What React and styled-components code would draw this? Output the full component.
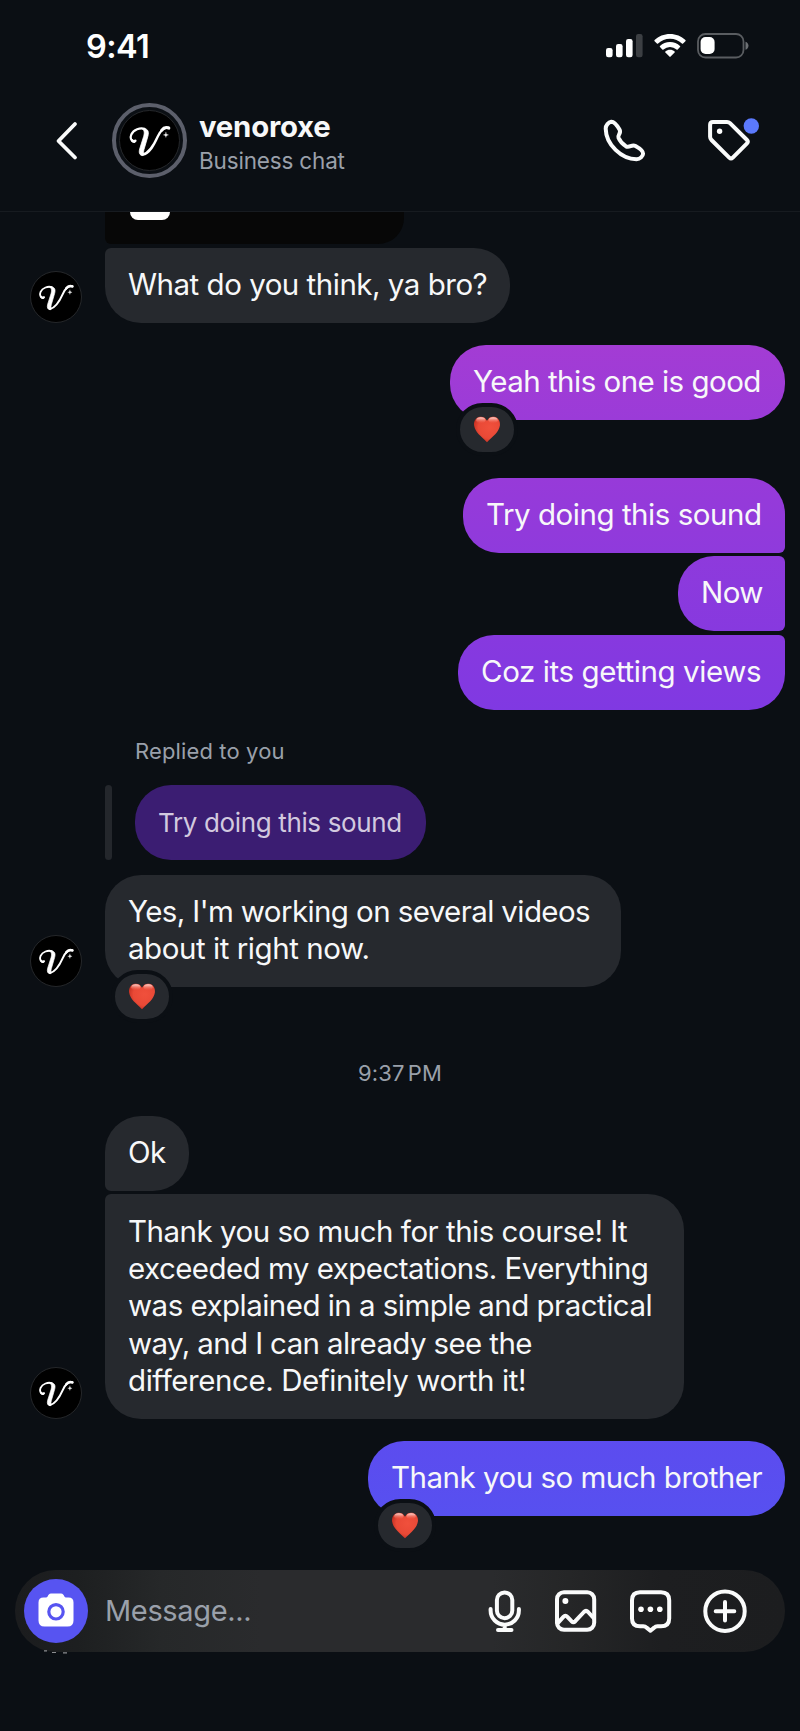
import React from 'react';
import styled, { createGlobalStyle } from 'styled-components';

const GlobalStyle = createGlobalStyle`
  * {
    box-sizing: border-box;
  }

  body {
    margin: 0;
    background: #0b0f14;
    font-family: Inter, "Liberation Sans", sans-serif;
    color: #f7f8f9;
  }
`;

const Screen = styled.div`
  width: 800px;
  height: 1731px;
  overflow: hidden;
  display: flex;
  flex-direction: column;
  background: #0b0f14;
`;

const StatusBar = styled.div`
  height: 92px;
  padding: 0 51px 0 86px;
  display: flex;
  align-items: center;
  justify-content: space-between;
`;

const Clock = styled.span`
  font-size: 32.5px;
  font-weight: 600;
  letter-spacing: -0.6px;
  color: #fff;
`;

const StatusIcons = styled.div`
  display: flex;
  align-items: center;
`;

const Header = styled.header`
  height: 120px;
  padding: 11px 39px 0 54px;
  display: flex;
  align-items: flex-start;
  border-bottom: 1px solid #171b20;
`;

const BackButton = styled.button`
  width: 26px;
  height: 75px;
  margin-right: 32px;
  padding: 0;
  border: none;
  background: none;
  display: flex;
  align-items: center;
`;

const AvatarRing = styled.div`
  width: 75px;
  height: 75px;
  flex: none;
  display: grid;
  place-items: center;
  border: 4px solid #5c5f6b;
  border-radius: 50%;
`;

const Avatar = styled.div`
  width: ${(p) => p.$size}px;
  height: ${(p) => p.$size}px;
  flex: none;
  border: 1px solid #25272a;
  border-radius: 50%;
  background: #000;

  svg {
    display: block;
    width: 100%;
    height: 100%;
  }
`;

const Contact = styled.div`
  flex: 1;
  padding: 5px 0 0 12px;
`;

const Name = styled.div`
  font-size: 29.3px;
  line-height: 37px;
  font-weight: 700;
  letter-spacing: -0.2px;
`;

const Subtitle = styled.div`
  font-size: 22.5px;
  line-height: 32px;
  letter-spacing: -0.17px;
  color: #9aa0aa;
`;

const HeaderActions = styled.div`
  display: flex;
  padding-top: 13px;
  gap: 56px;
`;

const Thread = styled.main`
  height: 1358px;
  padding-right: 15px;
`;

const Row = styled.div`
  display: flex;
  align-items: flex-end;
  justify-content: ${(p) => (p.$mine ? 'flex-end' : 'flex-start')};
  margin-top: ${(p) => p.$gap}px;
`;

const Gutter = styled.div`
  width: 105px;
  flex: none;
  padding-left: 30px;
`;

const MediaCard = styled.div`
  width: 299px;
  height: 32px;
  margin-left: 105px;
  padding-left: 25px;
  border-radius: 0 0 26px 6px;
  background: #070707;
`;

const MediaChip = styled.div`
  width: 40px;
  height: 8px;
  border-radius: 0 0 10px 10px;
  background: #fff;
`;

const Bubble = styled.div`
  position: relative;
  width: ${(p) => p.$width}px;
  padding: 18.1px 0 19.4px 23px;
  border-radius: ${(p) => p.$radius || '36px'};
  background: ${(p) => p.$bg || '#26292e'};
  font-size: 29.5px;
  line-height: 37.4px;
  white-space: nowrap;
`;

const Line = styled.div`
  letter-spacing: ${(p) => p.$track}px;
`;

const Reaction = styled.div`
  position: absolute;
  left: 5.5px;
  bottom: -36px;
  width: 62px;
  height: 53px;
  display: grid;
  place-items: center;
  border: 4px solid #0b0f14;
  border-radius: 27px;
  background: #26292e;
`;

const ReplyLabel = styled.div`
  margin: 27px 0 0 135px;
  font-size: 22px;
  line-height: 28px;
  letter-spacing: 0.13px;
  color: #9aa0aa;
`;

const Quote = styled.div`
  display: flex;
  gap: 23px;
  margin: 20px 0 0 105px;
`;

const QuoteBar = styled.div`
  width: 7px;
  height: 75px;
  border-radius: 4px;
  background: #24272c;
`;

const QuoteBubble = styled.div`
  width: 291px;
  height: 75px;
  padding-left: 23px;
  border-radius: 36px;
  background: #3b1d72;
  color: #d2c9df;
  font-size: 26px;
  line-height: 75px;
  letter-spacing: -0.36px;
  white-space: nowrap;
`;

const TimeStamp = styled.div`
  width: 800px;
  margin-top: 72px;
  font-size: 22px;
  line-height: 28px;
  text-align: center;
  word-spacing: -3px;
  letter-spacing: 0.1px;
  color: #9aa0aa;
`;

const Composer = styled.footer`
  position: relative;
  height: 82px;
  margin: 0 15px;
  padding: 0 38px 0 9px;
  display: flex;
  align-items: center;
  border-radius: 41px;
  background: linear-gradient(90deg, #1b1c1e 0%, #1d1f20 8%, #262829 19%, #2a2b2d 32%, #2a2b2d 62%, #252627 72%, #1d1e20 84%, #1c1d1f 100%);
`;

const CameraButton = styled.button`
  width: 64px;
  height: 64px;
  padding: 0;
  display: grid;
  place-items: center;
  border: none;
  border-radius: 50%;
  background: #5754f1;
`;

const Placeholder = styled.span`
  flex: 1;
  padding: 0 0 2px 17px;
  font-size: 29px;
  letter-spacing: -0.35px;
  color: #9aa0aa;
`;

const ComposerActions = styled.div`
  display: flex;
  align-items: center;
  gap: 30px;
`;

const PeekingAvatar = styled.svg`
  position: absolute;
  left: 27px;
  bottom: -2px;
`;

const stroke = {
  fill: 'none',
  stroke: '#fafbfb',
  strokeWidth: 4,
  strokeLinecap: 'round',
  strokeLinejoin: 'round',
};

const SignalIcon = () => (
  <svg width="37" height="24" viewBox="0 0 37 24" fill="#fff">
    <rect x="0" y="14" width="6.6" height="9.3" rx="2.2" />
    <rect x="10" y="10" width="6.6" height="13.3" rx="2.2" />
    <rect x="20" y="5" width="6.6" height="18.3" rx="2.2" />
    <rect x="30" y="0" width="6.6" height="23.3" rx="2.2" fill="#3c3f43" />
  </svg>
);

const WifiIcon = () => (
  <svg width="32" height="24" viewBox="0 0 32 24" fill="#fff" style={{ marginLeft: 11 }}>
    <path d="M16 0C22 0 27.400 2.300 31.400 6.100Q31.900 6.700 31.400 7.300L29.100 9.600Q28.500 10.100 27.900 9.600A17 17 0 0 0 4.100 9.600Q3.500 10.100 2.900 9.600L.6 7.300Q.1 6.700 .6 6.100C4.600 2.300 10 0 16 0Z" />
    <path d="M16 8C19.900 8 23.400 9.500 26 11.900Q26.600 12.500 26 13.100L23.700 15.400Q23.100 15.900 22.500 15.400A9.700 9.700 0 0 0 9.500 15.400Q8.900 15.900 8.300 15.400L6 13.100Q5.400 12.500 6 11.900C8.600 9.500 12.100 8 16 8Z" />
    <path d="M16 15.700C17.800 15.700 19.400 16.400 20.600 17.400Q21.200 18 20.600 18.600L16.600 22.600Q16 23.200 15.400 22.600L11.400 18.600Q10.800 18 11.400 17.400C12.600 16.400 14.200 15.700 16 15.700Z" />
  </svg>
);

const BatteryIcon = () => (
  <svg width="52" height="26" viewBox="0 0 52 26" style={{ marginLeft: 11 }}>
    <rect x="1" y="1" width="45.500" height="23.500" rx="7.500" fill="none" stroke="#5a5d61" strokeWidth="1.800" />
    <rect x="3.600" y="4" width="14" height="17" rx="5" fill="#fff" />
    <path d="M48.500 8.700C50.200 9.200 51.500 10.800 51.500 12.700S50.200 16.300 48.500 16.800Z" fill="#6d7074" />
  </svg>
);

const BackIcon = () => (
  <svg width="26" height="42" viewBox="0 0 26 42" {...stroke} strokeWidth="3.800">
    <path d="M21 4L4.500 21L21 37.500" />
  </svg>
);

const Logo = () => (
  <svg viewBox="0 0 60 60" fill="none" stroke="#fff" strokeLinecap="round" strokeLinejoin="round">
    <path d="M14.500 31.300C11.200 30.500 10 27.300 11.500 23.900C13.800 18.800 20.500 16.800 25 18.200" strokeWidth="2.200" />
    <path d="M12.300 29.800C13.200 31.200 14.500 31.300 15.500 30.300" strokeWidth="2.700" />
    <path d="M22 17.800C28.300 17.300 29.800 20.400 28.400 25.600L24.400 39.200C23.700 41.700 23.700 43.400 24.600 44.400L23 45.300C19.800 45.100 19 42.400 20 38.600L24 26C25.200 22 24.800 19.200 22 17.800Z" fill="#fff" strokeWidth=".8" />
    <path d="M22.800 44.400C30.300 43.200 35 33.500 38.400 26C41.300 19.600 44.300 16.300 49.700 17" strokeWidth="2.400" />
    <path d="M42.300 19.600C44.500 16.700 46.700 16.200 49.700 17.400" strokeWidth="3" />
    <path d="M46.700 21.700C47 23.700 47.300 24 49.300 24.300C47.300 24.600 47 24.900 46.700 26.900C46.400 24.900 46.100 24.600 44.100 24.300C46.100 24 46.400 23.700 46.700 21.700Z" fill="#fff" strokeWidth=".3" />
  </svg>
);

const PhoneIcon = () => (
  <svg width="46" height="46" viewBox="602 116 46 46" {...stroke}>
    <path d="M611.300 121.800C608.500 122.300 605.700 125.200 605.700 128.700C606 144.500 621.500 159.200 636.500 159.200C640.200 159.200 642.900 156.200 643.100 153.600C643.300 150.500 638.500 147.700 635.500 146C631.500 143.900 629.500 148.500 625.800 146.200C622.500 144 619.700 140.700 618.500 137.800C617.400 134.800 621.700 133.300 619.500 129.600C617.300 125.800 614.700 121.500 611.300 121.800Z" />
  </svg>
);

const TagIcon = () => (
  <svg width="57" height="46" viewBox="704 116 57 46">
    <path
      {...stroke}
      d="M713 121.900H727Q728.800 121.900 730 123.100L747 140Q748.700 141.700 747 143.400L732.800 157.600Q731 159.300 729.200 157.600L711.500 140Q710.100 138.600 710.100 136.700V124.800Q710.100 121.900 713 121.900Z"
    />
    <circle cx="719.600" cy="131.300" r="2.700" fill="#fff" />
    <circle cx="751.300" cy="126" r="7.700" fill="#5b79fc" />
  </svg>
);

const HeartIcon = () => (
  <svg width="28" height="27" viewBox="0 0 28 27">
    <defs>
      <radialGradient id="heartFill" cx="0.6" cy="0.42" r="0.72">
        <stop offset="0" stopColor="#f0503c" />
        <stop offset="0.6" stopColor="#e94936" />
        <stop offset="1" stopColor="#b52418" />
      </radialGradient>
      <linearGradient id="heartShine" x1="0" y1="0" x2="0" y2="1">
        <stop offset="0" stopColor="#ffe9e4" stopOpacity="0.95" />
        <stop offset="1" stopColor="#f4705f" stopOpacity="0" />
      </linearGradient>
    </defs>
    <path
      d="M14 4.800C12 .3 8 .3 5.700 1.100C2.300 2.300 .6 6 1.100 9.500C2 16 8.200 20.500 14 26.200C19.800 20.500 26 16 26.900 9.500C27.400 6 25.700 2.300 22.300 1.100C20 .3 16 .3 14 4.800Z"
      fill="url(#heartFill)"
    />
    <ellipse cx="7.800" cy="4.200" rx="4.600" ry="3" fill="url(#heartShine)" />
    <ellipse cx="20.200" cy="4.200" rx="4.600" ry="3" fill="url(#heartShine)" />
  </svg>
);

const CameraIcon = () => (
  <svg width="36" height="34" viewBox="0 0 36 34" style={{ marginTop: -3 }}>
    <path
      d="M13 .5H23C25 .5 25.600 2 26.300 3.200C26.900 4.200 27.400 4.600 28.500 4.600H30.500Q35.500 4.600 35.500 9.600V27.500Q35.500 33.500 29.500 33.500H6.500Q.5 33.500 .5 27.500V9.600Q.5 4.600 5.500 4.600H7.500C8.600 4.600 9.100 4.200 9.700 3.200C10.400 2 11 .5 13 .5Z"
      fill="#fff"
    />
    <circle cx="18" cy="18.800" r="7.200" fill="#fff" stroke="#5754f1" strokeWidth="3.200" />
  </svg>
);

const MicIcon = () => (
  <svg width="36" height="46" viewBox="487 1588 36 46" {...stroke}>
    <rect x="496.900" y="1592.400" width="15.400" height="25.800" rx="7.700" />
    <path d="M490.600 1609V1610.500A14 14 0 0 0 518.900 1610.500V1609M504.700 1625V1630M498 1630H511.500" />
  </svg>
);

const PictureIcon = () => (
  <svg width="45" height="46" viewBox="553 1588 45 46" {...stroke}>
    <rect x="557" y="1592.200" width="37.200" height="37.600" rx="7" />
    <path d="M557.500 1623.300L563.400 1616.900Q565.400 1614.800 567.400 1616.900L571.500 1621.200Q573.400 1623 575.300 1621.200L583.900 1612Q586 1609.900 588.100 1612L594 1618.300" />
    <circle cx="565.400" cy="1601" r="3" fill="#fff" stroke="none" />
  </svg>
);

const CommentIcon = () => (
  <svg width="45" height="46" viewBox="628 1588 45 46" {...stroke}>
    <path d="M640 1592.200H661Q669.200 1592.200 669.200 1600.200V1618.500Q669.200 1626.300 661 1626.300H657.500Q655.500 1626.300 654.200 1627.600L650.400 1630.800L646.600 1627.600Q645.300 1626.300 643.300 1626.300H640Q632 1626.300 632 1618.500V1600.200Q632 1592.200 640 1592.200Z" />
    <g fill="#fff" stroke="none">
      <circle cx="641" cy="1609.300" r="2.800" />
      <circle cx="650.400" cy="1609.300" r="2.800" />
      <circle cx="659.800" cy="1609.300" r="2.800" />
    </g>
  </svg>
);

const PlusIcon = () => (
  <svg width="44" height="46" viewBox="703 1588 44 46" {...stroke}>
    <circle cx="725" cy="1611.200" r="19.700" />
    <path d="M725 1602V1620.600M715.700 1611.200H734.300" />
  </svg>
);

// each line is [text, letter-spacing]
function Message({ lines, mine, gap, avatar, heart, width, radius, bg }) {
  return (
    <Row $mine={mine} $gap={gap}>
      {!mine && <Gutter>{avatar && <Avatar $size={52}><Logo /></Avatar>}</Gutter>}
      <Bubble $width={width} $radius={radius} $bg={bg}>
        {lines.map(([text, track]) => (
          <Line key={text} $track={track}>{text}</Line>
        ))}
        {heart && <Reaction><HeartIcon /></Reaction>}
      </Bubble>
    </Row>
  );
}

const sent = [
  { lines: [['Yeah this one is good', -0.52]], gap: 22, width: 335, heart: true, bg: 'linear-gradient(#a33cd4, #9b3bd8)' },
  { lines: [['Try doing this sound', -0.46]], gap: 58, width: 322, radius: '36px 36px 6px 36px', bg: 'linear-gradient(#973ad9, #8f3adc)' },
  { lines: [['Now', -0.6]], gap: 3.6, width: 107, radius: '36px 6px 6px 36px', bg: 'linear-gradient(#8e3adc, #8739df)' },
  { lines: [['Coz its getting views', -0.41]], gap: 3.6, width: 327, radius: '36px 6px 36px 36px', bg: 'linear-gradient(#8739df, #8039e2)' },
];

const working = [
  ["Yes, I'm working on several videos", -0.6],
  ['about it right now.', -0.45],
];

const review = [
  ['Thank you so much for this course! It', -0.5],
  ['exceeded my expectations. Everything', -0.54],
  ['was explained in a simple and practical', -0.53],
  ['way, and I can already see the', -0.62],
  ['difference. Definitely worth it!', -0.43],
];

function App() {
  return (
    <>
      <GlobalStyle />
      <Screen>
        <StatusBar>
          <Clock>9:41</Clock>
          <StatusIcons>
            <SignalIcon />
            <WifiIcon />
            <BatteryIcon />
          </StatusIcons>
        </StatusBar>

        <Header>
          <BackButton aria-label="Back"><BackIcon /></BackButton>
          <AvatarRing>
            <Avatar $size={61}><Logo /></Avatar>
          </AvatarRing>
          <Contact>
            <Name>venoroxe</Name>
            <Subtitle>Business chat</Subtitle>
          </Contact>
          <HeaderActions>
            <PhoneIcon />
            <TagIcon />
          </HeaderActions>
        </Header>

        <Thread>
          <MediaCard><MediaChip /></MediaCard>
          <Message lines={[['What do you think, ya bro?', -0.49]]} gap={4} width={405} radius="6px 36px 36px 36px" avatar />
          {sent.map((message) => (
            <Message key={message.width} mine {...message} />
          ))}

          <ReplyLabel>Replied to you</ReplyLabel>
          <Quote>
            <QuoteBar />
            <QuoteBubble>Try doing this sound</QuoteBubble>
          </Quote>
          <Message lines={working} gap={15} width={515.5} avatar heart />

          <TimeStamp>9:37 PM</TimeStamp>
          <Message lines={[['Ok', -0.6]]} gap={29} width={83.5} radius="36px 36px 36px 6px" />
          <Message lines={review} gap={3.6} width={579} radius="6px 36px 36px 36px" avatar />
          <Message lines={[['Thank you so much brother', -0.5]]} mine gap={22} width={417} heart bg="linear-gradient(#5c4cef, #5750f0)" />
        </Thread>

        <Composer>
          <CameraButton aria-label="Camera"><CameraIcon /></CameraButton>
          <Placeholder>Message...</Placeholder>
          <ComposerActions>
            <MicIcon />
            <PictureIcon />
            <CommentIcon />
            <PlusIcon />
          </ComposerActions>
          <PeekingAvatar width="28" height="4" viewBox="0 0 28 4">
            <path d="M2 .8H5M10 2.500H14M21 2.800H25" stroke="#8b8d90" strokeWidth="1.200" />
          </PeekingAvatar>
        </Composer>
      </Screen>
    </>
  );
}

export default App;
